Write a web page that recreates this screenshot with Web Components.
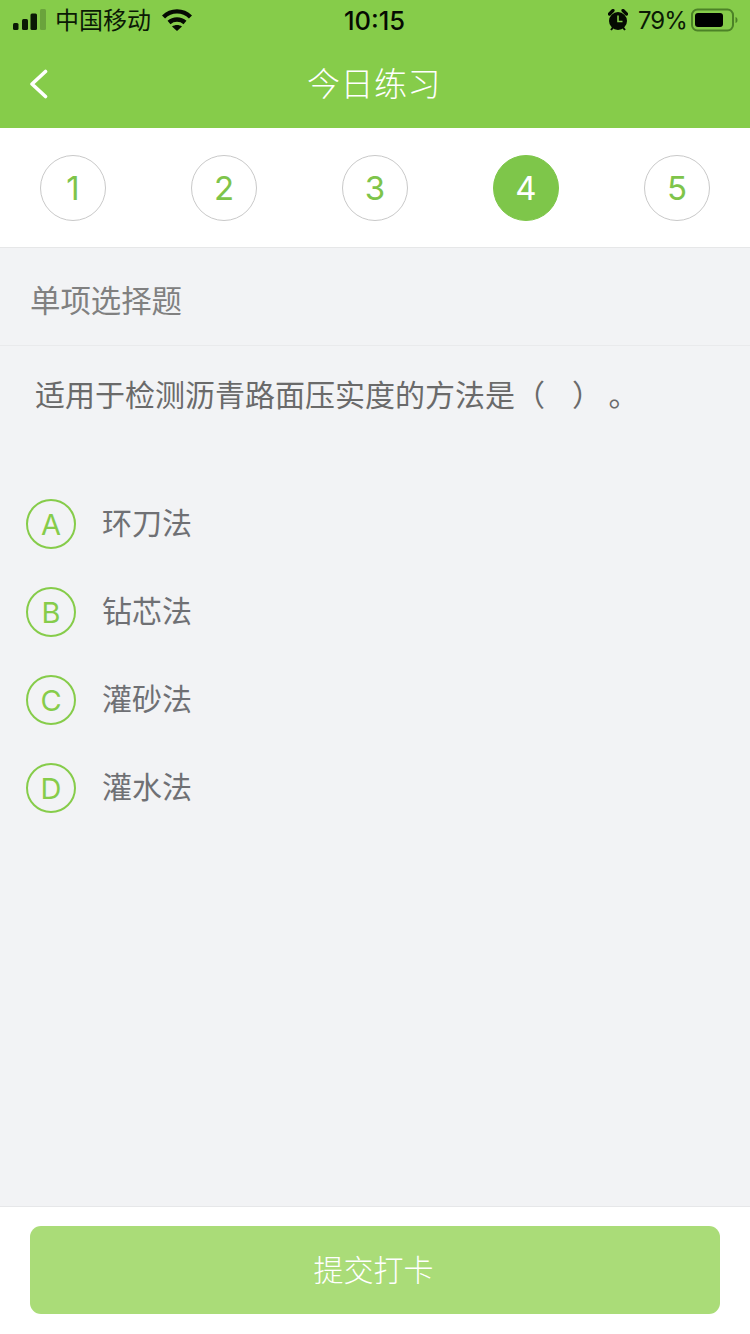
<!DOCTYPE html>
<html lang="zh">
<head>
<meta charset="utf-8">
<title>今日练习</title>
<style>
  html, body { margin: 0; padding: 0; }
  body {
    width: 750px;
    height: 1334px;
    background: #f2f3f5;
    font-family: "Noto Sans CJK SC", "Liberation Sans", sans-serif;
    display: flex;
    flex-direction: column;
    overflow: hidden;
  }
</style>
</head>
<body>
<status-bar></status-bar>
<nav-bar>今日练习</nav-bar>
<step-list>
  <step-item>1</step-item>
  <step-item>2</step-item>
  <step-item>3</step-item>
  <step-item active>4</step-item>
  <step-item>5</step-item>
</step-list>
<section-title>单项选择题</section-title>
<question-text>适用于检测沥青路面压实度的方法是（&nbsp;&nbsp;&nbsp;&nbsp;）&nbsp;。</question-text>
<option-list>
  <option-item letter="A">环刀法</option-item>
  <option-item letter="B">钻芯法</option-item>
  <option-item letter="C">灌砂法</option-item>
  <option-item letter="D">灌水法</option-item>
</option-list>
<submit-bar>提交打卡</submit-bar>

<script>
class StatusBar extends HTMLElement {
  constructor() {
    super();
    this.attachShadow({ mode: "open" });
  }

  connectedCallback() {
    this.shadowRoot.innerHTML = /* html */`
      <style>
        :host {
          display: grid;
          grid-template-columns: 1fr auto 1fr;
          align-items: center;
          height: 40px;
          padding: 0 12px 0 13px;
          background: #86cc4a;
          color: #0b1a05;
          font-family: Inter, "Liberation Sans", sans-serif;
          font-size: 24px;
        }
        .left, .right { display: flex; align-items: center; }
        .right { justify-content: flex-end; }
        .carrier { margin: -2px 0 0 9px; font-family: "Noto Sans CJK SC", sans-serif; line-height: 40px; }
        .wifi { margin-left: 11px; }
        .time { font-weight: 500; font-size: 25.5px; color: #050a02; margin-left: -2px; }
        .pct { margin: 0 4px 0 10px; font-weight: 400; font-size: 24px; letter-spacing: -0.9px; }
        svg { display: block; }
      </style>
      <div class="left">
        <svg width="33" height="22" viewBox="0 0 33 22">
          <rect x="0" y="14" width="5.5" height="7" rx="1.5" fill="#0b1a05"/>
          <rect x="9" y="10" width="6" height="11" rx="1.5" fill="#0b1a05"/>
          <rect x="17.5" y="4.5" width="6.5" height="16.5" rx="1.5" fill="#0b1a05"/>
          <rect x="27" y="0" width="6" height="21" rx="1.5" fill="#6aa33c"/>
        </svg>
        <span class="carrier">中国移动</span>
        <svg class="wifi" width="30" height="22" viewBox="0 0 30 22" fill="none" stroke="#050a02" stroke-width="4.4">
          <path d="M1.5 8 C9 0.5 21 0.5 28.5 8"/>
          <path d="M7 13.5 C11.5 9.5 18.5 9.5 23 13.5"/>
          <path d="M15 22 L10 17.5 C13 15.5 17 15.5 20 17.5 Z" fill="#050a02" stroke="none"/>
        </svg>
      </div>
      <div class="time">10:15</div>
      <div class="right">
        <svg width="20" height="22" viewBox="0 0 20 22">
          <circle cx="10" cy="12" r="9" fill="#050a02"/>
          <path d="M1.5 5 L5 1.5 M15 1.5 L18.5 5" stroke="#050a02" stroke-width="3.2" stroke-linecap="round"/>
          <path d="M3 21 L5 18.5 M17 21 L15 18.5" stroke="#050a02" stroke-width="2"/>
          <path d="M10 6.5 V12.5 H14.5" fill="none" stroke="#86cc4a" stroke-width="1.6"/>
        </svg>
        <span class="pct">79%</span>
        <svg width="47" height="24" viewBox="0 0 47 24">
          <rect x="1" y="1.5" width="41" height="21" rx="5.5" fill="none" stroke="#4c8227" stroke-width="2"/>
          <rect x="4" y="5" width="28" height="14" rx="3" fill="#000"/>
          <path d="M44.5 9 C46 9.5 46.5 10.5 46.5 12 C46.5 13.5 46 14.5 44.5 15 Z" fill="#4c8227"/>
        </svg>
      </div>
    `;
  }
}

class NavBar extends HTMLElement {
  constructor() {
    super();
    this.attachShadow({ mode: "open" });
  }

  connectedCallback() {
    this.shadowRoot.innerHTML = /* html */`
      <style>
        :host {
          display: flex;
          align-items: center;
          justify-content: center;
          position: relative;
          height: 88px;
          background: #86cc4a;
          color: #fff;
          font-size: 33px;
          font-weight: 300;
        }
        .title { margin: -4px 2px 0 0; letter-spacing: 0.5px; }
        svg { position: absolute; left: 28px; top: 29px; }
      </style>
      <svg width="22" height="30" viewBox="0 0 22 30" fill="none" stroke="#fff" stroke-width="3.6" stroke-linecap="round" stroke-linejoin="round">
        <path d="M17.5 2.5 L4 15 L17.5 27.5"/>
      </svg>
      <div class="title"><slot></slot></div>
    `;
  }
}

class StepList extends HTMLElement {
  constructor() {
    super();
    this.attachShadow({ mode: "open" });
  }

  connectedCallback() {
    this.shadowRoot.innerHTML = /* html */`
      <style>
        :host {
          display: flex;
          justify-content: space-between;
          align-items: center;
          height: 119px;
          padding: 0 40px 0;
          background: #fff;
          border-bottom: 1px solid #e6e7e8;
          box-sizing: content-box;
        }
      </style>
      <slot></slot>
    `;
  }
}

class StepItem extends HTMLElement {
  constructor() {
    super();
    this.attachShadow({ mode: "open" });
  }

  connectedCallback() {
    this.shadowRoot.innerHTML = /* html */`
      <style>
        :host {
          display: flex;
          align-items: center;
          justify-content: center;
          box-sizing: border-box;
          width: 66px;
          height: 66px;
          border: 1px solid #c9c9c9;
          border-radius: 50%;
          color: #7ec44a;
          font-family: Inter, "Liberation Sans", sans-serif;
          font-size: 33px;
          font-weight: 400;
        }
        :host([active]) {
          background: #7ec64a;
          border-color: #7ec64a;
          color: #fff;
        }
      </style>
      <slot></slot>
    `;
  }
}

class SectionTitle extends HTMLElement {
  constructor() {
    super();
    this.attachShadow({ mode: "open" });
  }

  connectedCallback() {
    this.shadowRoot.innerHTML = /* html */`
      <style>
        :host {
          display: flex;
          align-items: center;
          box-sizing: border-box;
          height: 98px;
          padding: 4px 0 0 30px;
          border-bottom: 1px solid #e9eaec;
          color: #808080;
          font-size: 30.4px;
        }
      </style>
      <slot></slot>
    `;
  }
}

class QuestionText extends HTMLElement {
  constructor() {
    super();
    this.attachShadow({ mode: "open" });
  }

  connectedCallback() {
    this.shadowRoot.innerHTML = /* html */`
      <style>
        :host {
          display: block;
          padding: 23px 0 0 35px;
          height: 128px;
          box-sizing: border-box;
          color: #6a6a6a;
          font-size: 30px;
          line-height: 48px;
          white-space: nowrap;
        }
      </style>
      <slot></slot>
    `;
  }
}

class OptionList extends HTMLElement {
  constructor() {
    super();
    this.attachShadow({ mode: "open" });
  }

  connectedCallback() {
    this.shadowRoot.innerHTML = /* html */`
      <style>
        :host {
          display: flex;
          flex-direction: column;
          gap: 38px;
          flex: 1;
          padding: 25px 0 0 26px;
        }
      </style>
      <slot></slot>
    `;
  }
}

class OptionItem extends HTMLElement {
  constructor() {
    super();
    this.attachShadow({ mode: "open" });
  }

  connectedCallback() {
    const letter = this.getAttribute("letter");
    this.shadowRoot.innerHTML = /* html */`
      <style>
        :host {
          display: flex;
          align-items: center;
          gap: 26px;
          height: 50px;
          color: #6f7074;
          font-size: 30px;
        }
        .letter {
          display: flex;
          align-items: center;
          justify-content: center;
          box-sizing: border-box;
          width: 50px;
          height: 50px;
          border: 2px solid #86cc4a;
          border-radius: 50%;
          color: #86cc4a;
          font-family: Inter, "Liberation Sans", sans-serif;
          font-size: 29px;
          font-weight: 400;
        }
        .label { margin-bottom: 7px; }
      </style>
      <div class="letter">${letter}</div>
      <div class="label"><slot></slot></div>
    `;
  }
}

class SubmitBar extends HTMLElement {
  constructor() {
    super();
    this.attachShadow({ mode: "open" });
  }

  connectedCallback() {
    this.shadowRoot.innerHTML = /* html */`
      <style>
        :host {
          display: block;
          box-sizing: border-box;
          height: 128px;
          padding: 19px 30px 20px;
          background: #fff;
          border-top: 1px solid #e6e7e9;
        }
        .btn {
          display: flex;
          align-items: center;
          justify-content: center;
          height: 88px;
          border-radius: 11px;
          background: #aadc78;
          color: #fff;
          font-size: 30px;
          font-weight: 300;
        }
        .text { margin: 0 3px 4px 0; }
      </style>
      <div class="btn"><span class="text"><slot></slot></span></div>
    `;
  }
}

window.customElements.define("status-bar", StatusBar);
window.customElements.define("nav-bar", NavBar);
window.customElements.define("step-list", StepList);
window.customElements.define("step-item", StepItem);
window.customElements.define("section-title", SectionTitle);
window.customElements.define("question-text", QuestionText);
window.customElements.define("option-list", OptionList);
window.customElements.define("option-item", OptionItem);
window.customElements.define("submit-bar", SubmitBar);
</script>
</body>
</html>
